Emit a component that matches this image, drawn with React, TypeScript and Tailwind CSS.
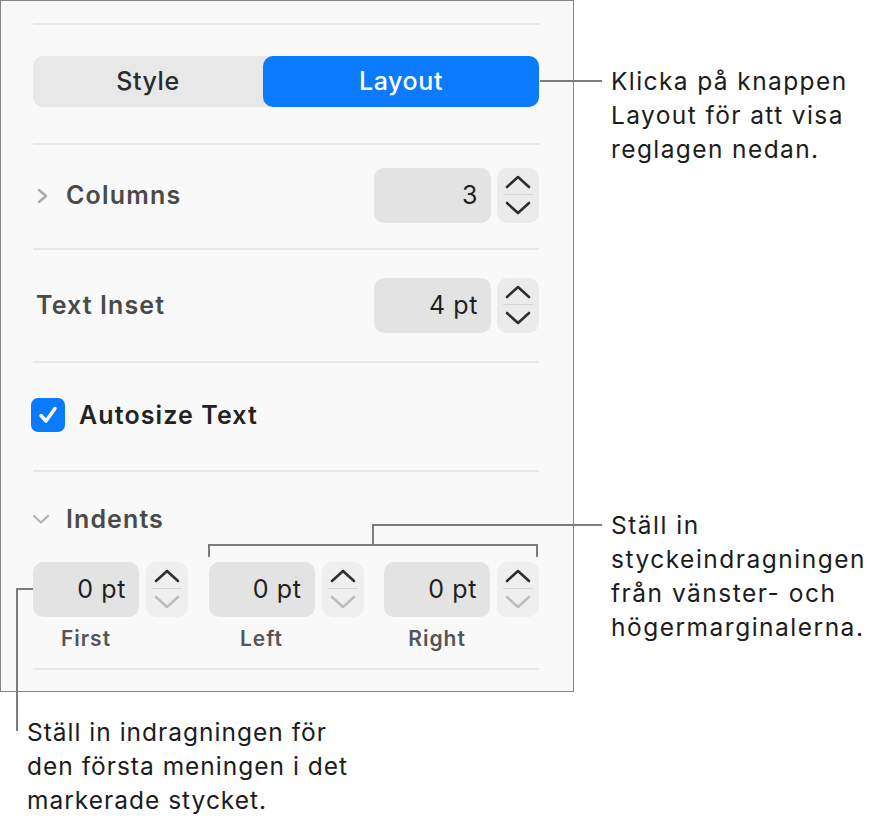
import React from "react";

const Up = ({ color = "#2e2e2e" }: { color?: string }) => (
  <svg width="26" height="14" viewBox="0 0 26 14" style={{ display: "block" }}>
    <path d="M2 12 L13 2 L24 12" fill="none" stroke={color} strokeWidth="2.6" strokeLinecap="round" strokeLinejoin="round" />
  </svg>
);
const Down = ({ color = "#2e2e2e" }: { color?: string }) => (
  <svg width="26" height="14" viewBox="0 0 26 14" style={{ display: "block" }}>
    <path d="M2 2 L13 12 L24 2" fill="none" stroke={color} strokeWidth="2.6" strokeLinecap="round" strokeLinejoin="round" />
  </svg>
);

const Stepper = ({ disabledDown = false, light = false }: { disabledDown?: boolean; light?: boolean }) => (
  <div className={`w-[42px] h-[55px] rounded-[10px] flex flex-col items-center pt-[7px] ${light ? "bg-[#efefef]" : "bg-[#ebebeb]"}`}>
    <Up />
    <div className="mt-[5px] h-px w-[30px] bg-[#d6d6d6]" />
    <div className="mt-[6px]">
      <Down color={disabledDown ? "#bdbdbd" : "#2e2e2e"} />
    </div>
  </div>
);

const Field = ({ value, w }: { value: string; w: string }) => (
  <div className={`${w} h-[55px] rounded-[10px] bg-[#e3e3e3] flex items-center justify-end pr-[13px] text-[25px] leading-none tracking-[0.6px] text-[#1f1f1f]`}>
    {value}
  </div>
);

const Sep = () => <div className="h-[2px] bg-[#e7e7e7]" />;

export default function App() {
  return (
    <div className="relative w-[886px] h-[819px] bg-white font-[Inter,sans-serif] overflow-hidden">
      {/* Panel */}
      <div className="w-[574px] h-[692px] border border-[#858585] bg-[#f9f9f9] pl-[32px] pr-[34px] pt-[22px]">
        <Sep />
        <div className="pt-[31px] pb-[36px]">
          <div className="flex h-[51px] rounded-[10px] bg-[#e8e8e8]">
            <div className="w-[230px] flex items-center justify-center text-[25px] leading-none tracking-[0.6px] font-medium text-[#2b2b2b]">Style</div>
            <div className="flex-1 rounded-[10px] bg-[#0a7aff] flex items-center justify-center text-[25px] leading-none tracking-[0.6px] font-medium text-white">Layout</div>
          </div>
        </div>
        <Sep />
        <div className="pt-[23px] pb-[25px] flex items-center">
          <svg width="14" height="18" viewBox="0 0 14 18" className="ml-[3px]">
            <path d="M3 3 L10 9 L3 15" fill="none" stroke="#a8a8a8" strokeWidth="2.4" strokeLinecap="round" strokeLinejoin="round" />
          </svg>
          <div className="ml-[16px] text-[25px] leading-none tracking-[1.2px] font-semibold text-[#4a4a4a]">Columns</div>
          <div className="ml-auto flex gap-[6px]">
            <Field value="3" w="w-[117px]" />
            <Stepper />
          </div>
        </div>
        <Sep />
        <div className="pt-[28px] pb-[28px] flex items-center">
          <div className="ml-[3px] text-[25px] leading-none tracking-[1.1px] font-semibold text-[#4a4a4a]">Text Inset</div>
          <div className="ml-auto flex gap-[6px]">
            <Field value="4 pt" w="w-[117px]" />
            <Stepper />
          </div>
        </div>
        <Sep />
        <div className="pt-[35px] pb-[38px] flex items-center">
          <div className="-ml-[2px] w-[34px] h-[34px] rounded-[7px] bg-[#0a7aff] flex items-center justify-center">
            <svg width="22" height="20" viewBox="0 0 22 20">
              <path d="M4 10.5 L9 16 L18 3.5" fill="none" stroke="white" strokeWidth="3.4" strokeLinecap="round" strokeLinejoin="round" />
            </svg>
          </div>
          <div className="ml-[14px] text-[25px] leading-none tracking-[1.1px] font-semibold text-[#232323]">Autosize Text</div>
        </div>
        <Sep />
        <div className="h-[196px] pt-[33px]">
          <div className="flex items-center h-[28px]">
            <svg width="18" height="12" viewBox="0 0 18 12" className="-ml-[1px]">
              <path d="M2 3 L9 9.5 L16 3" fill="none" stroke="#b3b3b3" strokeWidth="2.2" strokeLinecap="round" strokeLinejoin="round" />
            </svg>
            <div className="ml-[16px] text-[25px] leading-none tracking-[1.1px] font-semibold text-[#4a4a4a]">Indents</div>
          </div>
          <div className="mt-[29px] flex justify-between">
            {["First", "Left", "Right"].map((l) => (
              <div key={l} className="w-[155px]">
                <div className="flex justify-between">
                  <Field value="0 pt" w="w-[106px]" />
                  <Stepper disabledDown light />
                </div>
                <div className="w-[106px] text-center mt-[10px] text-[21px] leading-[24px] tracking-[1px] font-semibold text-[#555555]">{l}</div>
              </div>
            ))}
          </div>
        </div>
        <Sep />
      </div>

      {/* Callout lines */}
      <div className="absolute left-[540px] top-[80px] w-[62px] h-[2px] bg-[#7d7d7d]" />

      <div className="absolute left-[208px] top-[544px] w-[330px] h-[2px] bg-[#7d7d7d]" />
      <div className="absolute left-[208px] top-[544px] w-[2px] h-[13px] bg-[#7d7d7d]" />
      <div className="absolute left-[536px] top-[544px] w-[2px] h-[13px] bg-[#7d7d7d]" />
      <div className="absolute left-[372px] top-[524px] w-[2px] h-[21px] bg-[#7d7d7d]" />
      <div className="absolute left-[372px] top-[524px] w-[230px] h-[2px] bg-[#7d7d7d]" />

      <div className="absolute left-[16px] top-[588px] w-[17px] h-[2px] bg-[#7d7d7d]" />
      <div className="absolute left-[16px] top-[588px] w-[2px] h-[143px] bg-[#7d7d7d]" />

      {/* Callout texts */}
      <div className="absolute left-[611px] top-[64px] text-[24.5px] leading-[34px] tracking-[1.4px] text-[#1c1c1c] whitespace-nowrap">
        Klicka på knappen
        <br />
        Layout för att visa
        <br />
        reglagen nedan.
      </div>
      <div className="absolute left-[611px] top-[508px] text-[24.5px] leading-[34px] tracking-[1.5px] text-[#1c1c1c] whitespace-nowrap">
        Ställ in
        <br />
        styckeindragningen
        <br />
        från vänster- och
        <br />
        högermarginalerna.
      </div>
      <div className="absolute left-[27px] top-[715px] text-[24.5px] leading-[34px] tracking-[1px] text-[#1c1c1c] whitespace-nowrap">
        Ställ in indragningen för
        <br />
        den första meningen i det
        <br />
        markerade stycket.
      </div>
    </div>
  );
}
